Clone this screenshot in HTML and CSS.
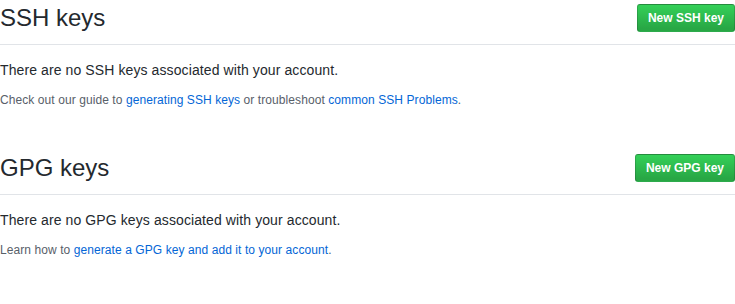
FILE: index.html
```html
<!DOCTYPE html>
<html>
<head>
<meta charset="utf-8">
<link rel="stylesheet" href="styles.css">
</head>
<body>
<div class="page">
  <div class="subhead">
    <h2 class="subhead-heading">SSH keys</h2>
    <a class="btn btn-primary" href="#">New SSH key</a>
  </div>
  <p class="blank">There are no SSH keys associated with your account.</p>
  <p class="note">Check out our guide to <a href="#">generating SSH keys</a> or troubleshoot <a href="#">common SSH Problems</a>.</p>

  <div class="subhead spacious">
    <h2 class="subhead-heading">GPG keys</h2>
    <a class="btn btn-primary" href="#">New GPG key</a>
  </div>
  <p class="blank">There are no GPG keys associated with your account.</p>
  <p class="note">Learn how to <a href="#">generate a GPG key and add it to your account</a>.</p>
</div>
</body>
</html>
```
FILE: styles.css
```css
html, body {
  margin: 0;
  padding: 0;
  background: #fff;
}
body {
  font-family: "Liberation Sans", Arial, Helvetica, sans-serif;
  font-size: 14px;
  line-height: 1.5;
  color: #24292e;
}
.page {
  display: flow-root;
}
a {
  color: #0366d6;
  text-decoration: none;
}
.subhead {
  display: flex;
  align-items: center;
  padding-bottom: 8px;
  margin-bottom: 15px;
  border-bottom: 1px solid #e1e4e8;
}
.spacious {
  margin-top: 41px;
}
.subhead-heading {
  flex: 1 1 auto;
  margin: 0;
  font-size: 24px;
  font-weight: normal;
  line-height: 36px;
}
.btn {
  display: inline-block;
  padding: 3px 10px;
  font-size: 12px;
  font-weight: bold;
  line-height: 20px;
  white-space: nowrap;
  border-radius: 3px;
  border: 1px solid rgba(27, 31, 35, 0.2);
}
.btn-primary {
  color: #fff;
  background-color: #28a745;
  background-image: linear-gradient(-180deg, #34d058 0%, #28a745 90%);
}
p {
  margin: 0 0 10px 0;
}
.blank {
  letter-spacing: 0.1px;
}
.note {
  font-size: 12px;
  color: #586069;
  letter-spacing: 0.08px;
}
```
